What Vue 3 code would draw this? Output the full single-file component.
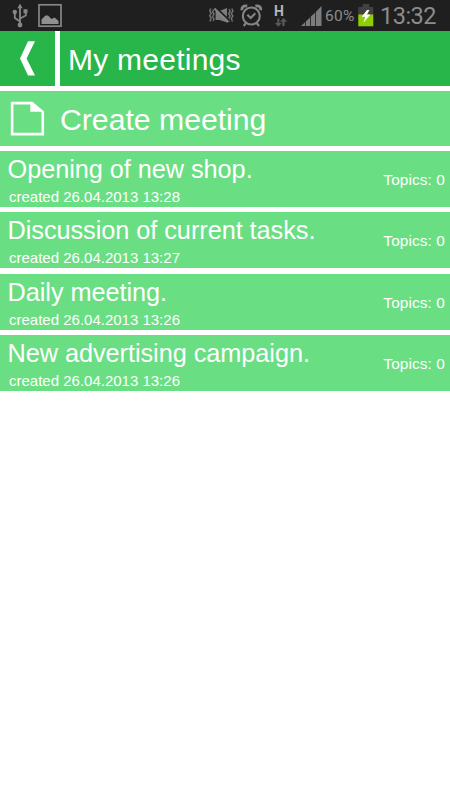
<template>
  <div class="screen">
    <div class="status-bar">
      <svg class="status-icons" viewBox="0 0 380 31" width="380" height="31">
        <!-- usb -->
        <g fill="none" stroke="#868686" stroke-width="1.8">
          <path d="M20 7V24M20 21.5L14.8 18V12M20 18.5L25.8 15.5V11" />
        </g>
        <path d="M20 3.5L22.6 8.3H17.4ZM23.5 9.2H27.5V13.2H23.5Z" fill="#868686" />
        <circle cx="14.8" cy="12" r="2.2" fill="#868686" />
        <circle cx="20" cy="25" r="2.4" fill="#868686" />
        <!-- picture -->
        <rect x="39" y="4.8" width="22" height="21.4" fill="none" stroke="#868686" stroke-width="1.7" />
        <path d="M41.5 24V19.5L45.5 15.6L48 15.6L51.5 19L54.5 17.5L58.5 21V24Z" fill="#909090" />
        <!-- vibration off -->
        <g fill="none" stroke="#747474" stroke-width="1.4">
          <path d="M210.8 8.5L209.7 11L211.2 13.2L209.7 15.7L211.2 18L210 21.5M213.6 9.5L212.6 12L214 14L212.6 16.5L214 19L213.2 21M229 9L230.2 11.2L228.6 13.5L230.2 16L228.6 18.5L229.6 21.5M231.8 8.5L232.9 11L231.3 13.5L232.9 16L231.3 18.5L232.5 21.5" />
        </g>
        <path d="M215.6 11H219.5L227 8V22.5L219.5 20H215.6Z" fill="#7c7c7c" />
        <path d="M216 8L229.5 20.8" stroke="#1f1f1f" stroke-width="2.4" />
        <path d="M214.4 8.5L228.4 22" stroke="#858585" stroke-width="2" />
        <!-- alarm -->
        <g fill="none" stroke="#858585" stroke-width="2.1">
          <circle cx="251.3" cy="16" r="8.5" />
          <path d="M247.3 14.8L250.7 18L255.3 13.2M246 23L243.7 26M256.6 23L259 26" />
          <path d="M242 10.2C241.4 7.2 244 5.2 247.2 6.2M255.4 6.2C258.8 5.2 261.3 7.2 260.6 10.2" stroke-width="2.8" />
        </g>
        <!-- data arrows -->
        <path d="M277.3 18.5V23H274.8L278.3 26.7L281.8 23H279.4V18.5ZM282.3 26V21.7H280L283.6 18L287.3 21.7H284.6V26Z" fill="#585858" />
        <!-- signal -->
        <path d="M301 26L305 22.2V26ZM305.8 21.4L310 17.5V26H305.8ZM310.8 16.6L315 12.7V26H310.8ZM315.8 11.9L321.5 6V26H315.8Z" fill="#7c7c7c" />
        <!-- battery -->
        <path d="M362.5 4H369.3V7H373.3V15H358.3V7H362.5Z" fill="#414141" />
        <rect x="358.3" y="14.5" width="15" height="11.8" fill="#8fce00" />
        <path d="M367 10L361.7 16.8H365.2L363.5 22.8L370.4 14.5H367L369.5 10Z" fill="#fff" />
      </svg>
      <span class="network">H</span>
      <span class="percent">60%</span>
      <span class="clock">13:32</span>
    </div>

    <header class="header">
      <button class="back">
        <svg viewBox="0 0 55 55" width="55" height="55">
          <path d="M28 10.3H35L26.6 27.5L35 44.6H28L20 27.5Z" fill="#fff" />
        </svg>
      </button>
      <h1 class="title">My meetings</h1>
    </header>

    <button class="create">
      <svg class="file-icon" viewBox="0 0 36 36" width="36" height="36">
        <path d="M2.1 2.1H22L32.8 11V33.1H2.1Z" fill="none" stroke="#fff" stroke-width="2.6" />
        <path d="M20.3 1L33.8 10.8H20.3Z" fill="#fff" />
      </svg>
      <span class="create-label">Create meeting</span>
    </button>

    <ul class="meetings">
      <li v-for="meeting in meetings" :key="meeting.name" class="meeting">
        <div class="info">
          <div class="name">{{ meeting.name }}</div>
          <div class="created">created {{ meeting.created }}</div>
        </div>
        <div class="topics">Topics: {{ meeting.topics }}</div>
      </li>
    </ul>
  </div>
</template>

<script setup>
const meetings = [
  { name: 'Opening of new shop.', created: '26.04.2013 13:28', topics: 0 },
  { name: 'Discussion of current tasks.', created: '26.04.2013 13:27', topics: 0 },
  { name: 'Daily meeting.', created: '26.04.2013 13:26', topics: 0 },
  { name: 'New advertising campaign.', created: '26.04.2013 13:26', topics: 0 }
]
</script>

<style>
body {
  margin: 0;
  background: #fff;
}
</style>

<style scoped>
.screen {
  width: 450px;
  height: 800px;
  overflow: hidden;
  background: #fff;
  color: #fff;
  font-family: "Liberation Sans", Arial, sans-serif;
}

.status-bar {
  position: relative;
  height: 31px;
  background: #1f1f1f;
  color: #8c8c8c;
  font-family: Roboto, sans-serif;
}

.status-icons {
  display: block;
}

/* labels lie over the icon strip */
.network,
.percent,
.clock {
  position: absolute;
  white-space: nowrap;
}

.network {
  left: 274px;
  top: 4px;
  font-size: 14px;
  line-height: 14px;
  font-weight: 700;
  color: #b5b5b5;
}

.percent {
  left: 325px;
  top: 8px;
  font-size: 15.5px;
  line-height: 16px;
  letter-spacing: 0.3px;
}

.clock {
  left: 380px;
  top: 4px;
  font-size: 23.5px;
  line-height: 25px;
  letter-spacing: -0.5px;
}

.header {
  display: flex;
  gap: 5px;
  height: 55px;
}

button {
  border: 0;
  padding: 0;
  color: inherit;
  font-family: inherit;
  text-align: left;
}

.back {
  width: 55px;
  height: 55px;
  background: #28b54a;
}

.back svg {
  display: block;
}

.title {
  flex: 1;
  margin: 0;
  padding-left: 8px;
  background: #28b54a;
  font-size: 30px;
  line-height: 57px;
  height: 55px;
  font-weight: 400;
  letter-spacing: 0.25px;
}

.create {
  display: flex;
  align-items: center;
  width: 100%;
  height: 55px;
  margin-top: 5px;
  padding-left: 10px;
  background: #6ade82;
}

.file-icon {
  margin-right: 14px;
}

.create-label {
  font-size: 30.2px;
  line-height: 55px;
  padding-top: 2px;
}

.meetings {
  display: flex;
  flex-direction: column;
  gap: 5.25px;
  margin: 5.1px 0 0;
  padding: 0;
  list-style: none;
}

.meeting {
  display: flex;
  justify-content: space-between;
  align-items: center;
  height: 56px;
  padding: 0 5px 0 7.5px;
  background: #6ade82;
}

.name {
  font-size: 25.3px;
  line-height: 34px;
  letter-spacing: -0.05px;
}

.created {
  padding-left: 1.5px;
  padding-top: 1px;
  margin-bottom: -1px;
  font-size: 15px;
  line-height: 20px;
}

.topics {
  padding-top: 2px;
  font-size: 15.4px;
  line-height: 20px;
  letter-spacing: 0.1px;
}
</style>
